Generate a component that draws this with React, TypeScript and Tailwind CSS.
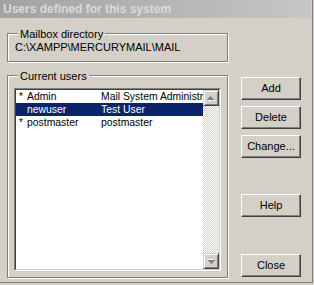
const users = [
  { mark: "*", name: "Admin", full: "Mail System Administrator", selected: false },
  { mark: "", name: "newuser", full: "Test User", selected: true },
  { mark: "*", name: "postmaster", full: "postmaster", selected: false },
];

function PushButton({ label }: { label: string }) {
  return (
    <button
      type="button"
      className="h-[23px] w-[60px] border border-t-white border-l-white border-r-[#404040] border-b-[#404040] bg-[#d4d0c8] text-[11px] leading-[13px] text-black shadow-[inset_-1px_-1px_0_#808080]"
    >
      {label}
    </button>
  );
}

function ScrollArrow({ up }: { up: boolean }) {
  return (
    <div className="flex h-[16px] w-[16px] items-center justify-center border border-t-[#d4d0c8] border-l-[#d4d0c8] border-r-[#404040] border-b-[#404040] bg-[#d4d0c8] shadow-[inset_1px_1px_0_#fff,inset_-1px_-1px_0_#808080]">
      <svg width="8" height="5" viewBox="0 0 8 5" shapeRendering="crispEdges" className={up ? "" : "rotate-180"}>
        <g fill="#fff" transform="translate(1 1)">
          <rect x="3" y="0" width="1" height="1" />
          <rect x="2" y="1" width="3" height="1" />
          <rect x="1" y="2" width="5" height="1" />
          <rect x="0" y="3" width="7" height="1" />
        </g>
        <g fill="#808080">
          <rect x="3" y="0" width="1" height="1" />
          <rect x="2" y="1" width="3" height="1" />
          <rect x="1" y="2" width="5" height="1" />
          <rect x="0" y="3" width="7" height="1" />
        </g>
      </svg>
    </div>
  );
}

function GroupBox({
  label,
  className,
  children,
}: {
  label: string;
  className: string;
  children: React.ReactNode;
}) {
  return (
    <div
      className={`relative w-[221px] border border-[#808080] shadow-[1px_1px_0_#fff,inset_1px_1px_0_#fff] ${className}`}
    >
      <span className="absolute left-[10px] top-[-6px] bg-[#d4d0c8] px-[2px] leading-[13px]">
        {label}
      </span>
      {children}
    </div>
  );
}

export default function App() {
  return (
    <div className="h-[285px] w-[314px] bg-[#d4d0c8] font-['Liberation_Sans',Arial,sans-serif] text-[11px] text-black">
      <div className="h-[283px] w-[313px] border-r border-b border-[#808080]">
        <div className="flex h-[18px] w-[311px] items-center bg-gradient-to-r from-[#a2a2a2] to-[#c6c6c6] pl-[3px] text-[12px] font-bold leading-[14px] text-[#dcdad5]">
          Users defined for this system
        </div>

        <div className="flex pl-[7px]">
          <div className="flex w-[222px] flex-col">
            <GroupBox label="Mailbox directory" className="mt-[15px] h-[29px] pl-[7px] pt-[7px]">
              <p className="leading-[13px]">C:\XAMPP\MERCURYMAIL\MAIL</p>
            </GroupBox>

            <GroupBox label="Current users" className="mt-[13px] h-[203px] pl-[6px] pt-[12px]">
              <div className="h-[183px] w-[207px] border border-t-[#808080] border-l-[#808080] border-r-white border-b-white">
                <div className="flex h-full w-full border border-t-[#404040] border-l-[#404040] border-r-[#d4d0c8] border-b-[#d4d0c8] bg-white">
                  <ul className="flex-1 overflow-hidden text-[10.4px]">
                    {users.map((u) => (
                      <li
                        key={u.name}
                        className={`flex h-[13px] leading-[13px] whitespace-nowrap ${
                          u.selected ? "bg-[#0a246a] text-white" : ""
                        }`}
                      >
                        <span className="w-[11px] pl-[3px] text-[10px]">{u.mark}</span>
                        <span className="w-[74px]">{u.name}</span>
                        <span className="flex-1 overflow-hidden">{u.full}</span>
                      </li>
                    ))}
                  </ul>
                  <div className="flex w-[16px] flex-col bg-[conic-gradient(#fff_25%,#d4d0c8_0_50%,#fff_0_75%,#d4d0c8_0)] [background-size:2px_2px]">
                    <ScrollArrow up />
                    <div className="flex-1" />
                    <ScrollArrow up={false} />
                  </div>
                </div>
              </div>
            </GroupBox>
          </div>

          <div className="ml-[12px] flex flex-col pt-[59px]">
            <div className="flex flex-col gap-[6px]">
              <PushButton label="Add" />
              <PushButton label="Delete" />
              <PushButton label="Change..." />
            </div>
            <div className="mt-[36px]">
              <PushButton label="Help" />
            </div>
            <div className="mt-[37px]">
              <PushButton label="Close" />
            </div>
          </div>
        </div>
      </div>
    </div>
  );
}
